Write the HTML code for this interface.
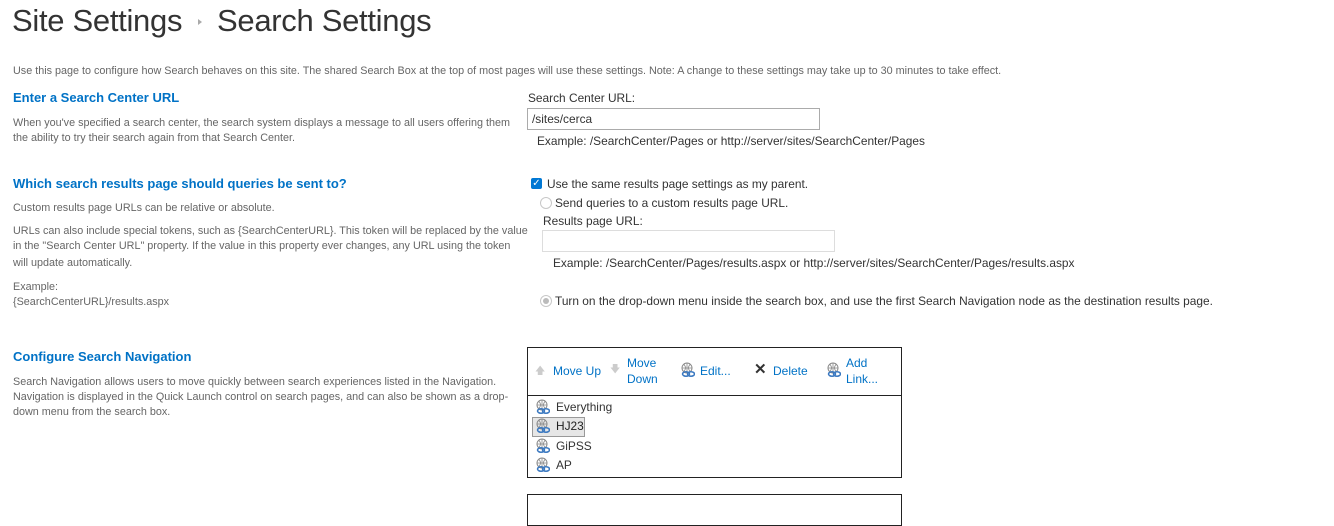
<!DOCTYPE html>
<html><head><meta charset="utf-8"><style>
body{margin:0;width:1334px;height:500px;background:#fff;position:relative;overflow:hidden;font-family:"Liberation Sans",sans-serif;}
.a{position:absolute;white-space:nowrap;line-height:16px;}
.t{font-size:31px;color:#333;line-height:40px;letter-spacing:-0.3px}
.s{font-size:10.8px;color:#666}
.h{font-size:13px;font-weight:bold;color:#0072c6}
.r{font-size:11.9px;color:#333}
.l{font-size:12px;color:#0072c6}
.box{position:absolute;border:1px solid #ababab;background:#fff}
.g{position:absolute;width:14px;height:16px}
</style></head><body>
<div class="a t" style="left:12px;top:1px">Site Settings</div>
<div class="a" style="left:198px;top:19px;width:0;height:0;border-left:4px solid #aaa;border-top:3px solid transparent;border-bottom:3px solid transparent"></div>
<div class="a t" style="left:217px;top:1px">Search Settings</div>

<div class="a s" style="left:13px;top:63px">Use this page to configure how Search behaves on this site. The shared Search Box at the top of most pages will use these settings. Note: A change to these settings may take up to 30 minutes to take effect.</div>

<div class="a h" style="left:13px;top:90px">Enter a Search Center URL</div>
<div class="a s" style="left:13px;top:115px">When you've specified a search center, the search system displays a message to all users offering them</div>
<div class="a s" style="left:13px;top:130px">the ability to try their search again from that Search Center.</div>
<div class="a r" style="left:528px;top:90px">Search Center URL:</div>
<div class="box" style="left:527px;top:108px;width:291px;height:20px"></div>
<div class="a r" style="left:532px;top:111px">/sites/cerca</div>
<div class="a r" style="left:537px;top:133px">Example: /SearchCenter/Pages or http://server/sites/SearchCenter/Pages</div>

<div class="a h" style="left:13px;top:176px">Which search results page should queries be sent to?</div>
<div class="a s" style="left:13px;top:200px">Custom results page URLs can be relative or absolute.</div>
<div class="a s" style="left:13px;top:223px">URLs can also include special tokens, such as {SearchCenterURL}. This token will be replaced by the value</div>
<div class="a s" style="left:13px;top:238px">in the "Search Center URL" property. If the value in this property ever changes, any URL using the token</div>
<div class="a s" style="left:13px;top:255px">will update automatically.</div>
<div class="a s" style="left:13px;top:279px">Example:</div>
<div class="a s" style="left:13px;top:294px">{SearchCenterURL}/results.aspx</div>

<div class="a" style="left:531px;top:178px;width:11px;height:11px;background:#0078d4;border-radius:2px;color:#fff;font-size:10px;line-height:11px;text-align:center">✓</div>
<div class="a r" style="left:547px;top:176px">Use the same results page settings as my parent.</div>
<div class="a" style="left:540px;top:197px;width:10px;height:10px;border:1px solid #c8c8c8;border-radius:50%"></div>
<div class="a r" style="left:555px;top:195px">Send queries to a custom results page URL.</div>
<div class="a r" style="left:543px;top:213px">Results page URL:</div>
<div class="box" style="left:542px;top:230px;width:291px;height:20px;border-color:#ddd"></div>
<div class="a r" style="left:553px;top:255px">Example: /SearchCenter/Pages/results.aspx or http://server/sites/SearchCenter/Pages/results.aspx</div>
<div class="a" style="left:540px;top:295px;width:10px;height:10px;border:1px solid #c8c8c8;border-radius:50%;background:#fff"><div style="margin:2px;width:6px;height:6px;border-radius:50%;background:#bbb"></div></div>
<div class="a r" style="left:555px;top:293px">Turn on the drop-down menu inside the search box, and use the first Search Navigation node as the destination results page.</div>

<div class="a h" style="left:13px;top:349px">Configure Search Navigation</div>
<div class="a s" style="left:13px;top:374px">Search Navigation allows users to move quickly between search experiences listed in the Navigation.</div>
<div class="a s" style="left:13px;top:389px">Navigation is displayed in the Quick Launch control on search pages, and can also be shown as a drop-</div>
<div class="a s" style="left:13px;top:404px">down menu from the search box.</div>

<div class="box" style="left:527px;top:347px;width:373px;height:129px;border-color:#222"></div>
<div class="a" style="left:528px;top:395px;width:373px;height:1px;background:#222"></div>
<div class="a" style="left:535px;top:364px;color:#ccc;font-size:10px">🡅</div>
<div class="a l" style="left:553px;top:363px">Move Up</div>
<div class="a" style="left:610px;top:362px;color:#ccc;font-size:10px">🡇</div>
<div class="a l" style="left:627px;top:355px">Move<br>Down</div>
<svg class="g" style="left:681px;top:362px" viewBox="0 0 14 16"><circle cx="6" cy="6" r="5" fill="none" stroke="#888"/><path d="M1 6h10M6 1v10M3 2.5q3 3 0 7M9 2.5q-3 3 0 7" stroke="#888" fill="none" stroke-width=".8"/><ellipse cx="5" cy="12" rx="3.5" ry="2.2" fill="none" stroke="#3a78c0" stroke-width="1.5"/><ellipse cx="10" cy="12" rx="3.5" ry="2.2" fill="none" stroke="#3a78c0" stroke-width="1.5"/></svg>
<div class="a l" style="left:700px;top:363px">Edit...</div>
<div class="a" style="left:754px;top:362px;font-size:15px;font-weight:bold;color:#333">✕</div>
<div class="a l" style="left:773px;top:363px">Delete</div>
<svg class="g" style="left:827px;top:362px" viewBox="0 0 14 16"><circle cx="6" cy="6" r="5" fill="none" stroke="#888"/><path d="M1 6h10M6 1v10M3 2.5q3 3 0 7M9 2.5q-3 3 0 7" stroke="#888" fill="none" stroke-width=".8"/><ellipse cx="5" cy="12" rx="3.5" ry="2.2" fill="none" stroke="#3a78c0" stroke-width="1.5"/><ellipse cx="10" cy="12" rx="3.5" ry="2.2" fill="none" stroke="#3a78c0" stroke-width="1.5"/></svg>
<div class="a l" style="left:846px;top:355px">Add<br>Link...</div>

<div class="a" style="left:532px;top:417px;width:51px;height:18px;background:#e6e6e6;border:1px solid #999"></div>
<svg class="g" style="left:536px;top:399px" viewBox="0 0 14 16"><circle cx="6" cy="6" r="5" fill="none" stroke="#888"/><path d="M1 6h10M6 1v10M3 2.5q3 3 0 7M9 2.5q-3 3 0 7" stroke="#888" fill="none" stroke-width=".8"/><ellipse cx="5" cy="12" rx="3.5" ry="2.2" fill="none" stroke="#3a78c0" stroke-width="1.5"/><ellipse cx="10" cy="12" rx="3.5" ry="2.2" fill="none" stroke="#3a78c0" stroke-width="1.5"/></svg>
<div class="a r" style="left:556px;top:399px">Everything</div>
<svg class="g" style="left:536px;top:418px" viewBox="0 0 14 16"><circle cx="6" cy="6" r="5" fill="none" stroke="#888"/><path d="M1 6h10M6 1v10M3 2.5q3 3 0 7M9 2.5q-3 3 0 7" stroke="#888" fill="none" stroke-width=".8"/><ellipse cx="5" cy="12" rx="3.5" ry="2.2" fill="none" stroke="#3a78c0" stroke-width="1.5"/><ellipse cx="10" cy="12" rx="3.5" ry="2.2" fill="none" stroke="#3a78c0" stroke-width="1.5"/></svg>
<div class="a r" style="left:556px;top:418px;color:#222">HJ23</div>
<svg class="g" style="left:536px;top:438px" viewBox="0 0 14 16"><circle cx="6" cy="6" r="5" fill="none" stroke="#888"/><path d="M1 6h10M6 1v10M3 2.5q3 3 0 7M9 2.5q-3 3 0 7" stroke="#888" fill="none" stroke-width=".8"/><ellipse cx="5" cy="12" rx="3.5" ry="2.2" fill="none" stroke="#3a78c0" stroke-width="1.5"/><ellipse cx="10" cy="12" rx="3.5" ry="2.2" fill="none" stroke="#3a78c0" stroke-width="1.5"/></svg>
<div class="a r" style="left:556px;top:438px">GiPSS</div>
<svg class="g" style="left:536px;top:457px" viewBox="0 0 14 16"><circle cx="6" cy="6" r="5" fill="none" stroke="#888"/><path d="M1 6h10M6 1v10M3 2.5q3 3 0 7M9 2.5q-3 3 0 7" stroke="#888" fill="none" stroke-width=".8"/><ellipse cx="5" cy="12" rx="3.5" ry="2.2" fill="none" stroke="#3a78c0" stroke-width="1.5"/><ellipse cx="10" cy="12" rx="3.5" ry="2.2" fill="none" stroke="#3a78c0" stroke-width="1.5"/></svg>
<div class="a r" style="left:556px;top:457px">AP</div>

<div class="box" style="left:527px;top:494px;width:373px;height:30px;border-color:#222"></div>
</body></html>
